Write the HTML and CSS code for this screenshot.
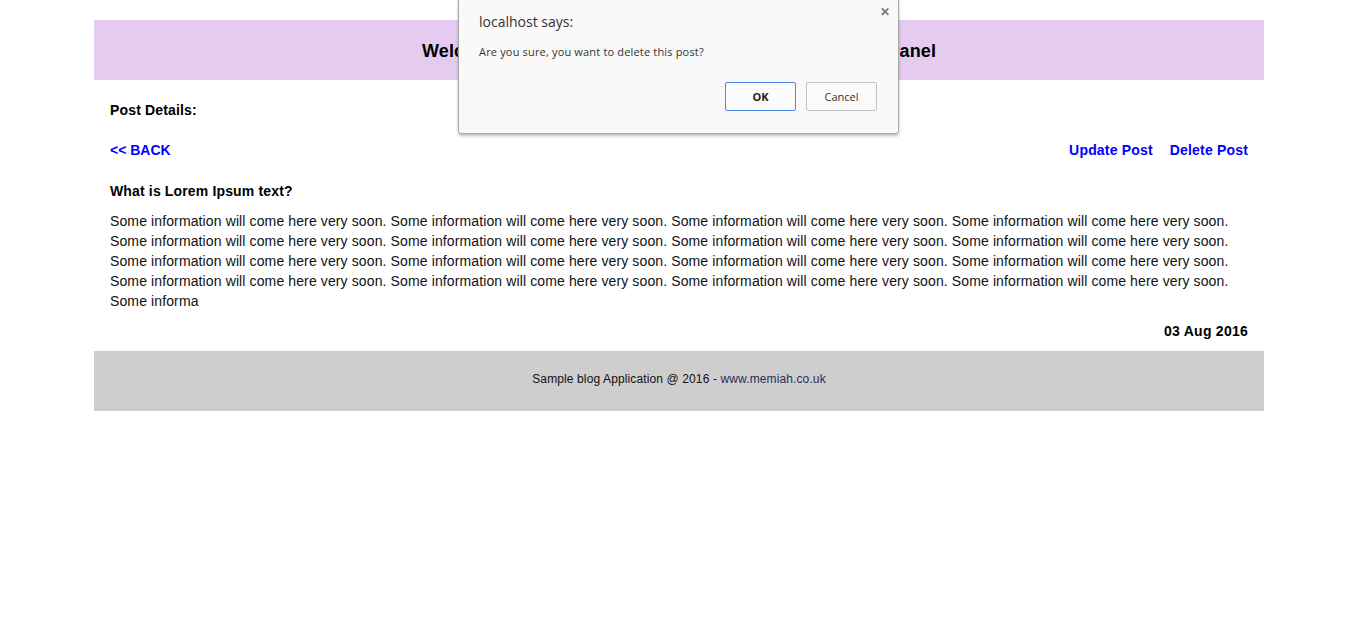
FILE: index.html
```html
<!DOCTYPE html>
<html>
<head>
<meta charset="utf-8">
<title>Post Details</title>
<link rel="stylesheet" href="styles.css">
</head>
<body>
<div class="page">
  <header class="site-header">
    <h1 class="site-title">Welcome to Sample blog Application - Admin Control Panel</h1>
  </header>
  <main class="content">
    <h2 class="section-title">Post Details:</h2>
    <div class="actions">
      <a class="link link-back" href="#">&lt;&lt; BACK</a>
      <div class="actions-right">
        <a class="link" href="#">Update Post</a>
        <a class="link" href="#">Delete Post</a>
      </div>
    </div>
    <h3 class="post-title">What is Lorem Ipsum text?</h3>
    <p class="post-body">Some information will come here very soon. Some information will come here very soon. Some information will come here very soon. Some information will come here very soon. Some information will come here very soon. Some information will come here very soon. Some information will come here very soon. Some information will come here very soon. Some information will come here very soon. Some information will come here very soon. Some information will come here very soon. Some information will come here very soon. Some information will come here very soon. Some information will come here very soon. Some information will come here very soon. Some information will come here very soon. Some informa</p>
    <div class="post-date">03 Aug 2016</div>
  </main>
  <footer class="site-footer">Sample blog Application @ 2016 - <a class="footer-link" href="#">www.memiah.co.uk</a></footer>
</div>

<div class="dialog">
  <div class="dialog-close">&#x2715;</div>
  <div class="dialog-title">localhost says:</div>
  <div class="dialog-msg">Are you sure, you want to delete this post?</div>
  <div class="dialog-buttons">
    <button class="btn btn-ok">OK</button>
    <button class="btn btn-cancel">Cancel</button>
  </div>
</div>
</body>
</html>
```
FILE: styles.css
```css
html, body {
  margin: 0;
  padding: 0;
  background: #ffffff;
}
body {
  font-family: "Liberation Sans", Arial, sans-serif;
  font-size: 14px;
  color: #000;
}
.page {
  width: 1170px;
  margin: 20px 0 0 94px;
}
.site-header {
  height: 60px;
  background: #e5cbf0;
  display: flex;
  align-items: center;
  justify-content: center;
  box-sizing: border-box;
  padding-top: 2px;
}
.site-title {
  margin: 0;
  font-size: 18px;
  line-height: 22px;
  font-weight: bold;
  letter-spacing: 0.1px;
}
.content {
  padding: 20px 16px 10px;
}
.section-title {
  margin: 0;
  font-size: 14px;
  line-height: 20px;
  font-weight: bold;
  letter-spacing: 0.15px;
}
.actions {
  margin-top: 20px;
  display: flex;
  justify-content: space-between;
  line-height: 20px;
}
.actions-right {
  display: flex;
  gap: 17px;
}
.link {
  color: #0000ff;
  font-weight: bold;
  text-decoration: none;
  letter-spacing: 0.18px;
}
.link-back {
  letter-spacing: 0;
}
.post-title {
  margin: 21px 0 0;
  font-size: 14px;
  line-height: 20px;
  font-weight: bold;
  letter-spacing: 0.15px;
}
.post-body {
  margin: 10px 0 0;
  line-height: 20px;
  color: #111;
  letter-spacing: 0.12px;
}
.post-date {
  margin-top: 10px;
  text-align: right;
  font-weight: bold;
  line-height: 20px;
  letter-spacing: 0.25px;
}
.site-footer {
  height: 60px;
  box-sizing: border-box;
  padding-top: 20px;
  background: #cecece;
  text-align: center;
  font-size: 12px;
  line-height: 16px;
  color: #111;
  letter-spacing: 0.12px;
}
.footer-link {
  color: #2b2b55;
  text-decoration: none;
}

.dialog {
  position: absolute;
  left: 458px;
  top: -1px;
  width: 441px;
  height: 135px;
  box-sizing: border-box;
  background: #f9f9f9;
  border: 1px solid #a8a8a8;
  border-radius: 0 0 3px 3px;
  box-shadow: 0 2px 3px rgba(0,0,0,0.25);
  font-family: "Open Sans", "Noto Sans", sans-serif;
  color: #333;
  padding: 12px 20px 0 20px;
}
.dialog-close {
  position: absolute;
  right: 8px;
  top: 3px;
  font-size: 12px;
  font-weight: bold;
  color: #777;
}
.dialog-title {
  font-size: 14px;
  line-height: 20px;
  color: #333;
}
.dialog-msg {
  margin-top: 12px;
  font-size: 11px;
  line-height: 16px;
  color: #333;
  letter-spacing: 0.17px;
}
.dialog-buttons {
  margin-top: 22px;
  display: flex;
  justify-content: flex-end;
  gap: 10px;
  padding-right: 1px;
}
.btn {
  width: 71px;
  height: 29px;
  box-sizing: border-box;
  background: #fbfbfb;
  border: 1px solid #c2c2c2;
  border-radius: 2px;
  font-family: "Open Sans", "Noto Sans", sans-serif;
  font-size: 11px;
  color: #333;
  padding: 0;
}
.btn-ok {
  border-color: #4d87e6;
  font-weight: bold;
  color: #222;
}
```
